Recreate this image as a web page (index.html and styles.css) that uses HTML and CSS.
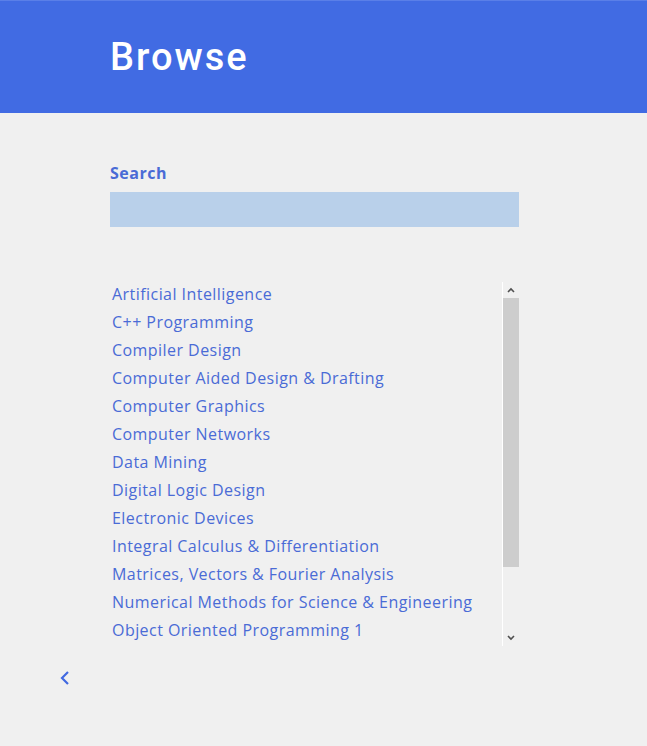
FILE: index.html
```html
<!DOCTYPE html>
<html>
<head>
<meta charset="utf-8">
<link rel="stylesheet" href="styles.css">
</head>
<body>
<header class="top">
  <h1 class="title">Browse</h1>
</header>
<main class="content">
  <label class="label" for="q">Search</label>
  <input class="search" id="q" type="text">
  <div class="listbox">
    <ul class="list">
      <li>Artificial Intelligence</li>
      <li>C++ Programming</li>
      <li>Compiler Design</li>
      <li>Computer Aided Design &amp; Drafting</li>
      <li>Computer Graphics</li>
      <li>Computer Networks</li>
      <li>Data Mining</li>
      <li>Digital Logic Design</li>
      <li>Electronic Devices</li>
      <li>Integral Calculus &amp; Differentiation</li>
      <li>Matrices, Vectors &amp; Fourier Analysis</li>
      <li>Numerical Methods for Science &amp; Engineering</li>
      <li>Object Oriented Programming 1</li>
      <li>Object Oriented Programming 2</li>
      <li>Operating Systems</li>
      <li>Software Engineering</li>
    </ul>
    <div class="scrollbar">
      <div class="sb-btn">
        <svg width="8" height="6" viewBox="0 0 8 6"><path d="M1 5 L4 2 L7 5" fill="none" stroke="#505050" stroke-width="1.6"/></svg>
      </div>
      <div class="sb-track"><div class="sb-thumb"></div></div>
      <div class="sb-btn">
        <svg width="8" height="6" viewBox="0 0 8 6"><path d="M1 1 L4 4 L7 1" fill="none" stroke="#505050" stroke-width="1.6"/></svg>
      </div>
    </div>
  </div>
</main>
<nav class="back">
  <svg width="12" height="16" viewBox="0 0 12 16"><path d="M9 2 L3 8 L9 14" fill="none" stroke="#4169e1" stroke-width="2.2"/></svg>
</nav>
</body>
</html>
```
FILE: styles.css
```css
html, body {
  margin: 0;
  padding: 0;
  background: #f0f0f0;
  font-family: "Open Sans", "Noto Sans", sans-serif;
}
.top {
  background: #416be3;
  height: 113px;
  border-top: 1px solid #5a7fe8;
  box-sizing: border-box;
  padding: 34px 0 0 110px;
}
.title {
  margin: 0;
  color: #fff;
  font-family: Roboto, sans-serif;
  font-weight: 500;
  font-size: 38px;
  line-height: 44px;
  letter-spacing: 2px;
}
.content {
  width: 409px;
  margin-left: 110px;
  padding-top: 50px;
  display: flex;
  flex-direction: column;
}
.label {
  color: #4a6bd6;
  font-weight: 700;
  font-size: 16px;
  line-height: 20px;
  letter-spacing: 0.5px;
}
.search {
  margin-top: 9px;
  height: 35px;
  box-sizing: border-box;
  border: none;
  background: #b9d0ea;
  outline: none;
}
.listbox {
  margin-top: 55px;
  height: 364px;
  display: flex;
}
.list {
  list-style: none;
  margin: 0;
  padding: 0 0 0 2px;
  flex: 1;
  overflow: hidden;
}
.list li {
  color: #4a6bd6;
  font-size: 16px;
  line-height: 24px;
  padding-bottom: 4px;
  letter-spacing: 0.45px;
  white-space: nowrap;
}
.scrollbar {
  width: 16px;
  border-left: 1px solid #ffffff;
  display: flex;
  flex-direction: column;
  background: #f0f0f0;
}
.sb-btn {
  height: 16px;
  display: flex;
  align-items: center;
  justify-content: center;
}
.sb-track {
  flex: 1;
}
.sb-thumb {
  height: 269px;
  background: #cdcdcd;
}
.back {
  margin: 23px 0 0 59px;
  height: 16px;
}
```
